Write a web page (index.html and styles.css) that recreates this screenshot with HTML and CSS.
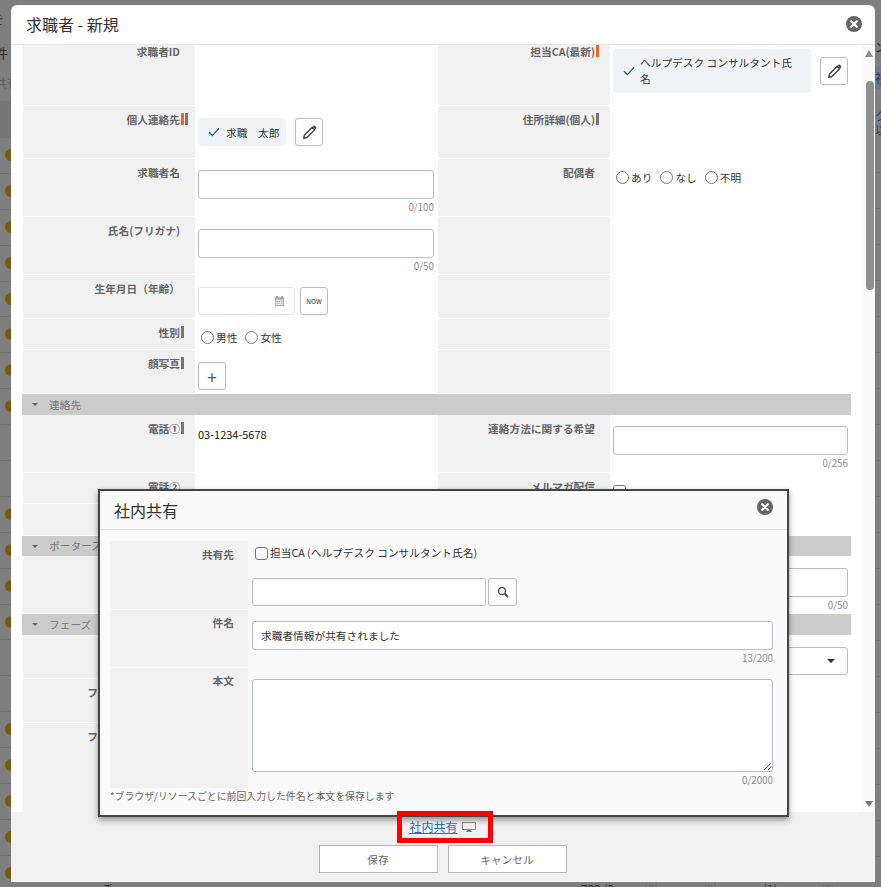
FILE: index.html
```html
<!DOCTYPE html>
<html lang="ja">
<head>
    <meta charset="UTF-8">
    <meta name="viewport" content="width=device-width, initial-scale=1.0">
    <title>求職者 - 新規</title>
    <link rel="stylesheet" href="styles.css">
</head>
<body>
    <svg class="icon-defs" width="0" height="0">
        <symbol id="i-close" viewBox="0 0 16 16">
            <circle cx="8" cy="8" r="8" fill="#666"/>
            <path d="M5.2 5.2l5.6 5.6M10.8 5.2l-5.6 5.6" stroke="#fff" stroke-width="2.2" stroke-linecap="round"/>
        </symbol>
        <symbol id="i-check" viewBox="0 0 12 10">
            <path d="M1 5.2l3.4 3.4L11 1.4" fill="none" stroke="#1f5c99" stroke-width="1.4"/>
        </symbol>
        <symbol id="i-pencil" viewBox="0 0 14 14">
            <path d="M1.6 12.4l.7-3L9.6 2.1l2.3 2.3-7.3 7.3z" fill="none" stroke="#444" stroke-width="1.3" stroke-linejoin="round"/>
            <path d="M10 1.7l.9-.9a.8.8 0 0 1 1.1 0l1.2 1.2a.8.8 0 0 1 0 1.1l-.9.9z" fill="#444"/>
        </symbol>
    </svg>

    <div class="behind-left">
        <div class="behind-head">
            <p class="frag frag-a">を</p>
            <p class="frag frag-b">件</p>
            <p class="frag frag-c">共有</p>
        </div>
        <div class="behind-band"></div>
        <div class="behind-row has-dot"></div>
        <div class="behind-row has-dot"></div>
        <div class="behind-row has-dot"></div>
        <div class="behind-row has-dot"></div>
        <div class="behind-row has-dot"></div>
        <div class="behind-row has-dot"></div>
        <div class="behind-row has-dot"></div>
        <div class="behind-row has-dot"></div>
        <div class="behind-row"></div>
        <div class="behind-row"></div>
        <div class="behind-row has-dot"></div>
        <div class="behind-row has-dot"></div>
        <div class="behind-row has-dot"></div>
        <div class="behind-row has-dot"></div>
        <div class="behind-row"></div>
        <div class="behind-row"></div>
        <div class="behind-row has-dot"></div>
        <div class="behind-row has-dot"></div>
        <div class="behind-row has-dot"></div>
        <div class="behind-row has-dot"></div>
        <div class="behind-row has-dot"></div>
    </div>

    <div class="behind-top"></div>

    <div class="modal">
        <div class="modal__header">
            <h1 class="modal__title">求職者 - 新規</h1>
            <svg class="icon-close"><use href="#i-close"/></svg>
        </div>

        <div class="modal__body">
            <div class="form">
                <div class="row row-60">
                    <div class="label label--first">求職者ID</div>
                    <div class="value"></div>
                    <div class="label label--first">担当CA(最新)<span class="marks"><i class="mark-req"></i></span></div>
                    <div class="value value--right value--chip-top">
                        <div class="chip chip--wide">
                            <svg class="icon-check"><use href="#i-check"/></svg>
                            <span>ヘルプデスク コンサルタント氏名</span>
                        </div>
                        <button class="icon-btn icon-btn--chip"><svg class="icon-pencil"><use href="#i-pencil"/></svg></button>
                    </div>
                </div>

                <div class="row row-52">
                    <div class="label">個人連絡先<span class="marks"><i class="mark-req"></i><i class="mark-opt"></i></span></div>
                    <div class="value value--pad12 value--flex">
                        <div class="chip">
                            <svg class="icon-check"><use href="#i-check"/></svg>
                            <span>求職　太郎</span>
                        </div>
                        <button class="icon-btn"><svg class="icon-pencil"><use href="#i-pencil"/></svg></button>
                    </div>
                    <div class="label">住所詳細(個人)<span class="marks"><i class="mark-opt"></i></span></div>
                    <div class="value value--right"></div>
                </div>

                <div class="row row-57">
                    <div class="label">求職者名</div>
                    <div class="value value--pad11">
                        <input class="text-input" type="text">
                        <div class="counter">0/100</div>
                    </div>
                    <div class="label">配偶者</div>
                    <div class="value value--right value--radios">
                        <label class="radio"><input type="radio">あり</label>
                        <label class="radio"><input type="radio">なし</label>
                        <label class="radio"><input type="radio">不明</label>
                    </div>
                </div>

                <div class="row row-57">
                    <div class="label">氏名(フリガナ)</div>
                    <div class="value value--pad12">
                        <input class="text-input" type="text">
                        <div class="counter">0/50</div>
                    </div>
                    <div class="label"></div>
                    <div class="value value--right"></div>
                </div>

                <div class="row row-43">
                    <div class="label">生年月日（年齢）</div>
                    <div class="value value--pad12 value--flex">
                        <div class="date-input">
                            <svg class="icon-cal" viewBox="0 0 12 12">
                                <path d="M1 2h10v9.5H1z" fill="#aaa"/>
                                <path d="M2.5 .6H4V3H2.500zM8 .6h1.500V3H8z" fill="#888"/>
                                <path d="M2 4.500h8v6H2z" fill="#e6e6e6"/>
                                <path d="M3 6h1v1H3zM5.500 6h1v1h-1zM8 6h1v1H8zM3 8h1v1H3zM5.500 8h1v1h-1zM8 8h1v1H8z" fill="#999"/>
                            </svg>
                        </div>
                        <button class="icon-btn icon-btn--now">NOW</button>
                    </div>
                    <div class="label"></div>
                    <div class="value value--right"></div>
                </div>

                <div class="row row-30">
                    <div class="label">性別<span class="marks"><i class="mark-opt"></i></span></div>
                    <div class="value value--radios">
                        <label class="radio"><input type="radio">男性</label>
                        <label class="radio"><input type="radio">女性</label>
                    </div>
                    <div class="label"></div>
                    <div class="value value--right"></div>
                </div>

                <div class="row row-43">
                    <div class="label">顔写真<span class="marks"><i class="mark-opt"></i></span></div>
                    <div class="value value--pad12">
                        <button class="icon-btn icon-btn--plus">+</button>
                    </div>
                    <div class="label"></div>
                    <div class="value value--right"></div>
                </div>

                <div class="section section-21"><span class="caret"></span>連絡先</div>

                <div class="row row-57">
                    <div class="label">電話①<span class="marks"><i class="mark-opt"></i></span></div>
                    <div class="value value--text">03-1234-5678</div>
                    <div class="label">連絡方法に関する希望</div>
                    <div class="value value--right value--pad11">
                        <input class="text-input text-input--right" type="text">
                        <div class="counter counter--right">0/256</div>
                    </div>
                </div>

                <div class="row row-30">
                    <div class="label">電話②</div>
                    <div class="value"></div>
                    <div class="label">メルマガ配信</div>
                    <div class="value value--right value--pad12"><input class="check" type="checkbox"></div>
                </div>

                <div class="row row-31">
                    <div class="label"></div>
                    <div class="value"></div>
                    <div class="label"></div>
                    <div class="value value--right"></div>
                </div>

                <div class="section section-20"><span class="caret"></span>ポータースカウト</div>

                <div class="row row-57">
                    <div class="label"></div>
                    <div class="value"></div>
                    <div class="label"></div>
                    <div class="value value--right value--pad12">
                        <input class="text-input text-input--right" type="text">
                        <div class="counter counter--right">0/50</div>
                    </div>
                </div>

                <div class="section section-21"><span class="caret"></span>フェーズ</div>

                <div class="row row-43">
                    <div class="label"></div>
                    <div class="value"></div>
                    <div class="label"></div>
                    <div class="value value--right value--pad12">
                        <div class="select"><span class="caret caret--dark"></span></div>
                    </div>
                </div>

                <div class="row row-43">
                    <div class="label label--wide">フェーズ 開始日時</div>
                    <div class="value"></div>
                    <div class="label"></div>
                    <div class="value value--right"></div>
                </div>

                <div class="row row-89">
                    <div class="label label--wide">フェーズ 終了日時</div>
                    <div class="value"></div>
                    <div class="label"></div>
                    <div class="value value--right"></div>
                </div>
            </div>

            <div class="scrollbar">
                <span class="scrollbar__up"></span>
                <span class="scrollbar__thumb"></span>
                <span class="scrollbar__down"></span>
            </div>
        </div>

        <div class="modal__footer">
            <div class="share-box">
                <a class="share-link" href="#">社内共有</a>
                <svg class="icon-screen" viewBox="0 0 14 12">
                    <path d="M.5 1.5h13v7H.5z" fill="none" stroke="#888" stroke-width="1"/>
                    <path d="M4 11h6L7 7.500z" fill="#777"/>
                </svg>
            </div>
            <div class="footer-buttons">
                <button class="btn">保存</button>
                <button class="btn">キャンセル</button>
            </div>
        </div>

        <div class="dialog">
            <div class="dialog__header">
                <h2 class="dialog__title">社内共有</h2>
                <svg class="icon-close"><use href="#i-close"/></svg>
            </div>
            <div class="dialog__body">
                <div class="d-row d-row-68">
                    <div class="d-label d-label--first">共有先</div>
                    <div class="d-value d-value--share">
                        <label class="d-check"><input class="check" type="checkbox">担当CA (ヘルプデスク コンサルタント氏名)</label>
                        <div class="search">
                            <input class="text-input text-input--search" type="text">
                            <button class="icon-btn icon-btn--search">
                                <svg class="icon-search" viewBox="0 0 12 12">
                                    <circle cx="5" cy="5" r="3.5" fill="none" stroke="#444" stroke-width="1.3"/>
                                    <path d="M7.6 7.6l3.4 3.4" stroke="#444" stroke-width="1.8"/>
                                </svg>
                            </button>
                        </div>
                    </div>
                </div>
                <div class="d-row d-row-57">
                    <div class="d-label">件名</div>
                    <div class="d-value">
                        <input class="text-input text-input--full" type="text" value="求職者情報が共有されました">
                        <div class="counter counter--full">13/200</div>
                    </div>
                </div>
                <div class="d-row d-row-120">
                    <div class="d-label">本文</div>
                    <div class="d-value">
                        <textarea class="text-area"></textarea>
                        <div class="counter counter--full">0/2000</div>
                    </div>
                </div>
                <p class="d-note">*ブラウザ/リソースごとに前回入力した件名と本文を保存します</p>
            </div>
        </div>
    </div>

    <div class="behind-right">
        <p class="frag-r frag-r-a">ン</p>
        <p class="frag-r frag-r-b">社</p>
        <p class="frag-r frag-r-c">ク</p>
        <p class="frag-r">以</p>
        <div class="behind-lines"></div>
    </div>

    <div class="behind-bottom">
        <span class="bit bit-1">チ</span>
        <span class="bit bit-2">ｒ ｧ</span>
        <span class="bit bit-3">702 (2</span>
        <span class="bit bit-4 bit--dim">(0)</span>
        <span class="bit bit-5 bit--dim">(0)</span>
        <span class="bit bit-6">(1)</span>
        <span class="bit bit-7 bit--dim">(0)</span>
    </div>
</body>
</html>
```

FILE: styles.css
```css
* {
    box-sizing: border-box;
    margin: 0;
    padding: 0;
}

body {
    display: grid;
    grid-template-columns: 11px 864px 6px;
    grid-template-rows: 5px 877px 5px;
    width: 881px;
    height: 887px;
    overflow: hidden;
    background-color: #7f7f7f;
    font-family: "Noto Sans CJK JP", "Noto Sans", sans-serif;
    font-size: 10.7px;
    color: #333;
}

.icon-defs {
    position: absolute;
}

/* dimmed page behind the modal */
.behind-left {
    grid-column: 1;
    grid-row: 1 / 4;
    overflow: hidden;
}

.behind-head {
    height: 102px;
    border-bottom: 1px solid #757575;
    color: #2b2b2b;
}

.frag {
    font-size: 13px;
    line-height: 16px;
    white-space: nowrap;
}

.frag-a {
    margin-left: -9px;
    padding-top: 11px;
}

.frag-b {
    margin-left: -5px;
    padding-top: 18px;
}

.frag-c {
    margin-left: -5px;
    padding-top: 14px;
    color: #5f5f5f;
    font-size: 12px;
}

.behind-band {
    height: 36px;
    background-color: #767676;
}

.behind-row {
    position: relative;
    height: 35.9px;
    border-bottom: 1px solid #717171;
}

.has-dot::before {
    content: "";
    position: absolute;
    left: 5px;
    top: 11px;
    width: 12px;
    height: 12px;
    border-radius: 50%;
    background-color: #785a12;
}

.behind-top {
    grid-column: 2;
    grid-row: 1;
}

.behind-right {
    grid-column: 3;
    grid-row: 1 / 4;
    overflow: hidden;
    white-space: nowrap;
}

.frag-r {
    font-size: 12px;
    line-height: 14px;
    color: #1d3f66;
}

.frag-r-a {
    padding-top: 40px;
    color: #222;
}

.frag-r-b {
    margin-top: 13px;
    padding: 4px 0;
    background-color: #6e7a88;
}

.frag-r-c {
    margin-top: 20px;
}

.behind-lines {
    height: 740px;
    background-image: repeating-linear-gradient(#7f7f7f 0, #7f7f7f 35px, #727272 35px, #727272 36px);
}

.behind-bottom {
    grid-column: 2;
    grid-row: 3;
    display: flex;
    overflow: hidden;
    font-size: 12px;
    line-height: 14px;
    color: #1d2b3a;
    white-space: nowrap;
}

.bit--dim {
    color: #666;
}

.bit-1 {
    margin-left: 91px;
}

.bit-2 {
    margin-left: 404px;
}

.bit-3 {
    margin-left: 42px;
}

.bit-4 {
    margin-left: 30px;
}

.bit-5 {
    margin-left: 44px;
}

.bit-6 {
    margin-left: 45px;
}

.bit-7 {
    margin-left: 43px;
}

/* main modal */
.modal {
    grid-column: 2;
    grid-row: 2;
    position: relative;
    display: flex;
    flex-direction: column;
    background-color: #fff;
    border-radius: 6px 6px 0 0;
}

.modal__header {
    display: flex;
    align-items: center;
    justify-content: space-between;
    height: 40px;
    padding: 2px 13px 4px 15px;
    border-bottom: 1px solid #e5e5e5;
}

.modal__title,
.dialog__title {
    font-size: 16px;
    font-weight: 400;
    color: #333;
}

.icon-close {
    width: 16px;
    height: 16px;
}

.modal__body {
    display: flex;
    height: 767px;
    padding-left: 12px;
    overflow: hidden;
}

.form {
    width: 828px;
    flex-shrink: 0;
}

.row {
    display: grid;
    grid-template-columns: 172px 243px 172px 241px;
    margin-bottom: 1px;
}

.row-30 {
    height: 30px;
}

.row-31 {
    height: 31px;
}

.row-43 {
    height: 43px;
}

.row-52 {
    height: 52px;
}

.row-57 {
    height: 57px;
}

.row-60 {
    height: 60px;
}

.row-89 {
    height: 89px;
}

.label {
    padding: 7px 15px 0 0;
    background-color: #f1f1f1;
    font-weight: 700;
    line-height: 14px;
    color: #666;
    text-align: right;
    white-space: nowrap;
}

.label--first {
    padding-top: 0;
}

.label--wide {
    letter-spacing: 0.6px;
}

.marks {
    display: inline-flex;
    gap: 1px;
    justify-content: flex-start;
    width: 8px;
    margin-right: -8px;
    padding-left: 1px;
    vertical-align: -1px;
}

.mark-req,
.mark-opt {
    display: block;
    width: 3px;
    height: 12px;
}

.mark-req {
    background-color: #f4641e;
}

.mark-opt {
    background-color: #777;
}

.value {
    padding-left: 3px;
    background-color: #fff;
}

.value--right {
    padding-left: 3px;
}

.value--flex {
    display: flex;
    align-items: flex-start;
}

.value--pad11 {
    padding-top: 11px;
}

.value--pad12 {
    padding-top: 12px;
}

.value--chip-top {
    display: flex;
    align-items: flex-start;
    padding-top: 4px;
}

.value--radios {
    display: flex;
    gap: 8px;
    padding-top: 12px;
    padding-left: 6px;
}

.value--text {
    padding-top: 11px;
    line-height: 16px;
    font-size: 11px;
    color: #111;
}

.chip {
    display: flex;
    align-items: center;
    height: 28px;
    padding: 0 7px 0 10px;
    border-radius: 4px;
    background-color: #eff3f6;
}

.chip--wide {
    width: 198px;
    height: 44px;
    padding-right: 12px;
    line-height: 16px;
}

.icon-check {
    flex-shrink: 0;
    width: 12px;
    height: 10px;
    margin-right: 6px;
}

.chip--wide .icon-check {
    margin-right: 5px;
}

.icon-btn {
    display: flex;
    align-items: center;
    justify-content: center;
    flex-shrink: 0;
    width: 28px;
    height: 28px;
    margin-left: 9px;
    border: 1px solid #bbb;
    border-radius: 3px;
    background-color: #fff;
    font-family: inherit;
    color: #555;
}

.icon-btn--chip {
    margin-top: 8px;
}

.icon-btn--now {
    margin-left: 5px;
    font-size: 6.5px;
    font-weight: 500;
}

.icon-btn--plus {
    margin-left: 0;
    font-size: 17px;
}

.icon-btn--search {
    width: 29px;
    margin-left: 2px;
}

.icon-pencil {
    width: 15px;
    height: 15px;
}

.icon-search {
    width: 12px;
    height: 12px;
}

.text-input {
    display: block;
    width: 236px;
    height: 29px;
    padding: 0 8px;
    border: 1px solid #b7bdc3;
    border-radius: 3px;
    background-color: #fff;
    font-family: inherit;
    font-size: 10.7px;
    color: #333;
}

.text-input--right {
    width: 235px;
}

.text-input--search {
    width: 234px;
    height: 28px;
}

.text-input--full {
    width: 521px;
}

.text-area {
    display: block;
    width: 521px;
    height: 93px;
    border: 1px solid #b7bdc3;
    border-radius: 3px;
    background-color: #fff;
    resize: both;
}

.counter {
    width: 236px;
    margin-top: 2px;
    font-size: 9.8px;
    line-height: 12px;
    color: #8a8a8a;
    text-align: right;
}

.counter--right {
    width: 235px;
}

.counter--full {
    width: 521px;
}

.date-input {
    display: flex;
    align-items: center;
    justify-content: flex-end;
    width: 97px;
    height: 28px;
    padding-right: 9px;
    border: 1px solid #e6e6e6;
    border-radius: 3px;
}

.icon-cal {
    width: 11px;
    height: 12px;
}

.radio {
    display: inline-flex;
    align-items: center;
    height: 13px;
    line-height: 13px;
    gap: 2px;
}

.radio input {
    appearance: none;
    width: 13px;
    height: 13px;
    border: 1px solid #777;
    border-radius: 50%;
    background-color: #fff;
}

.check {
    appearance: none;
    display: block;
    width: 13px;
    height: 13px;
    border: 1px solid #777;
    border-radius: 3px;
    background-color: #fff;
}

.section {
    display: flex;
    align-items: center;
    margin-left: -1px;
    padding-left: 10px;
    background-color: #ccc;
    line-height: 14px;
    color: #777;
}

.section-20 {
    height: 20px;
}

.section-21 {
    height: 21px;
}

.caret {
    width: 0;
    height: 0;
    margin-right: 11px;
    border-top: 3px solid #666;
    border-left: 3px solid transparent;
    border-right: 3px solid transparent;
}

.caret--dark {
    margin-right: 0;
    border-top-color: #333;
    border-left-width: 4px;
    border-right-width: 4px;
    border-top-width: 4px;
}

.select {
    display: flex;
    align-items: center;
    justify-content: flex-end;
    width: 235px;
    height: 28px;
    padding-right: 12px;
    border: 1px solid #b7bdc3;
    border-radius: 3px;
}

.scrollbar {
    display: flex;
    flex-direction: column;
    align-items: center;
    width: 13px;
    margin-left: 11px;
    background-color: #fafafa;
}

.scrollbar__up {
    margin-top: 5px;
    border-bottom: 7px solid #8f8f8f;
    border-left: 4px solid transparent;
    border-right: 4px solid transparent;
}

.scrollbar__thumb {
    width: 8px;
    height: 209px;
    margin-top: 24px;
    margin-left: 2px;
    border-radius: 4px;
    background-color: #8f8f8f;
}

.scrollbar__down {
    margin-top: auto;
    margin-bottom: 5px;
    border-top: 6px solid #777;
    border-left: 4px solid transparent;
    border-right: 4px solid transparent;
}

.modal__footer {
    flex: 1;
    display: flex;
    flex-direction: column;
    align-items: center;
    background-color: #f1f1f1;
    border-bottom: 1px solid #fff;
    border-right: 1px solid #fff;
}

.share-box {
    position: relative;
    z-index: 2;
    display: flex;
    align-items: center;
    flex-shrink: 0;
    width: 96px;
    height: 32px;
    margin-top: -1px;
    margin-left: 4px;
    padding-left: 8px;
    border: 5px solid #f00;
}

.share-link {
    font-size: 12px;
    line-height: 16px;
    color: #2a6ebb;
}

.icon-screen {
    width: 14px;
    height: 12px;
    margin-left: 4px;
}

.footer-buttons {
    display: flex;
    gap: 10px;
    margin-top: 2px;
}

.btn {
    width: 119px;
    height: 28px;
    border: 1px solid #b5b5b5;
    background-color: #fff;
    font-family: inherit;
    font-size: 10.7px;
    color: #666;
}

/* share dialog on top of the form */
.dialog {
    position: absolute;
    left: 87px;
    top: 484px;
    z-index: 1;
    width: 691px;
    height: 328px;
    border: 2px solid #444;
    background-color: #fafafa;
    box-shadow: 0 3px 6px rgba(0, 0, 0, 0.4);
}

.dialog__header {
    display: flex;
    align-items: center;
    justify-content: space-between;
    height: 39px;
    padding: 0 14px 6px 14px;
    border-bottom: 1px solid #e5e5e5;
}

.dialog__title {
    margin-top: 5px;
}

.dialog__body {
    padding: 11px 14px 0 10px;
}

.d-row {
    display: grid;
    grid-template-columns: 138px 1fr;
    margin-bottom: 1px;
}

.d-row-57 {
    height: 57px;
}

.d-row-68 {
    height: 68px;
}

.d-row-120 {
    height: 120px;
}

.d-label {
    padding: 6px 14px 0 0;
    background-color: #f1f1f1;
    font-weight: 700;
    line-height: 14px;
    color: #666;
    text-align: right;
}

.d-label--first {
    padding-top: 7px;
}

.d-value {
    padding: 11px 0 0 4px;
}

.d-value--share {
    padding-top: 4px;
}

.d-check {
    display: flex;
    align-items: center;
    gap: 2px;
    height: 16px;
    margin-left: 3px;
    line-height: 16px;
    color: #333;
}

.search {
    display: flex;
    margin-top: 17px;
}

.d-note {
    margin-top: 2px;
    font-size: 9.9px;
    line-height: 12px;
    color: #666;
}
```
